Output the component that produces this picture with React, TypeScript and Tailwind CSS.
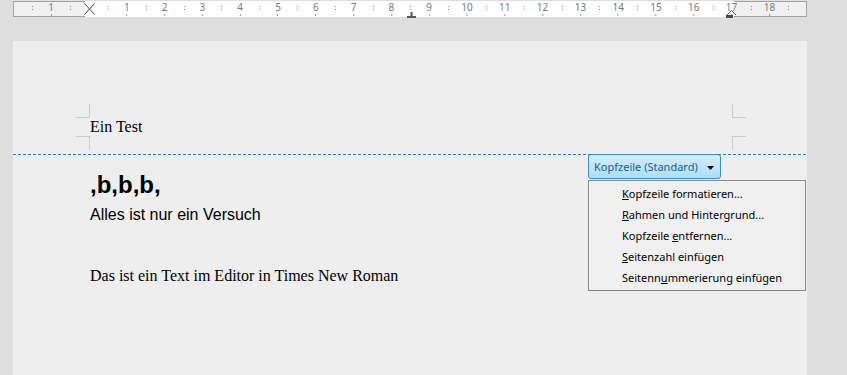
import React from "react";

const CM = 37.8;
const ZERO = 76;

function Ruler() {
  const ints: number[] = [];
  for (let n = -1; n <= 18; n++) if (n !== 0) ints.push(n);
  const halves: number[] = [];
  for (let h = -1.5; h <= 18.5; h += 1) halves.push(h);
  return (
    <div className="relative w-[794px] h-[16px] flex">
      <div className="w-[72px] h-full bg-[#f0f0f0] border border-r-0 border-[#a3a3a3]" />
      <div className="flex-1 h-full bg-white" />
      <div className="w-[73px] h-full bg-[#f0f0f0] border border-l-0 border-[#a3a3a3]" />
      <div className="absolute inset-0 pointer-events-none">
        {ints.map((n) => (
          <div
            key={n}
            className="absolute top-0 flex flex-col items-center -translate-x-1/2"
            style={{ left: ZERO + n * CM }}
          >
            <span className="mt-px text-[10px] leading-[10px] text-[#7b7b7b] font-['Noto_Sans',sans-serif]">
              {Math.abs(n)}
            </span>
            <span className="mt-[2px] w-px h-[2px] bg-[#9a9a9a]" />
          </div>
        ))}
        {halves.map((h) => (
          <div
            key={h}
            className="absolute top-[5px] flex flex-col gap-[2px]"
            style={{ left: Math.round(ZERO + h * CM) }}
          >
            <span className="w-px h-px bg-[#8a8a8a]" />
            <span className="w-px h-px bg-[#8a8a8a]" />
          </div>
        ))}
        <svg className="absolute left-[71px] top-[2px]" width="11" height="12" viewBox="0 0 11 12">
          <path d="M0.5 0.5 L10.5 11.5 M10.5 0.5 L0.5 11.5" stroke="#4a4a4a" strokeWidth="1" fill="none" />
        </svg>
        <svg className="absolute left-[394px] top-[11px]" width="9" height="6" viewBox="0 0 9 6">
          <rect x="3.5" y="0" width="2" height="5" fill="#555" />
          <rect x="0" y="4" width="9" height="2" fill="#555" />
        </svg>
        <svg className="absolute left-[713px] top-[9px]" width="11" height="8" viewBox="0 0 11 8">
          <path d="M1 5 L5.5 0.5 L10 5" stroke="#555" strokeWidth="1" fill="none" />
          <rect x="0" y="5" width="7" height="3" fill="#4a4a4a" />
        </svg>
      </div>
    </div>
  );
}

function Corner({ side, pos }: { side: "l" | "r"; pos: "t" | "b" }) {
  const cls =
    side === "l"
      ? pos === "t"
        ? "border-r border-b"
        : "border-r border-t"
      : pos === "t"
      ? "border-l border-b"
      : "border-l border-t";
  return <div className={`w-[14px] h-[14px] border-[#cccccc] ${cls}`} />;
}

export default function App() {
  return (
    <div className="w-[847px] h-[375px] overflow-hidden bg-[#dedede] flex flex-col">
      <div className="h-[41px] pt-px pl-[13px] shrink-0">
        <Ruler />
      </div>
      <div className="relative ml-[13px] w-[794px] flex-1 bg-[#eeeeee] flex flex-col">
        {/* header */}
        <div className="h-[113px] pt-[63px] pl-[63px] pr-[61px] flex justify-between shrink-0">
          <div className="flex flex-col">
            <Corner side="l" pos="t" />
            <div className="h-[18px] pl-[14px] whitespace-nowrap text-[16px] leading-[18px] text-black font-['Liberation_Serif',serif]">
              Ein Test
            </div>
            <Corner side="l" pos="b" />
          </div>
          <div className="flex flex-col">
            <Corner side="r" pos="t" />
            <div className="h-[18px]" />
            <Corner side="r" pos="b" />
          </div>
        </div>
        <div className="h-px w-full shrink-0 bg-[repeating-linear-gradient(90deg,#2b78b8_0_3px,transparent_3px_5px)]" />
        {/* body */}
        <div className="pl-[77px] flex flex-col text-black">
          <div className="mt-[16px] text-[24px] leading-[27px] font-bold font-['Liberation_Sans',sans-serif]">
            ,b,b,b,
          </div>
          <div className="mt-[8px] text-[16px] leading-[18px] font-['Liberation_Sans',sans-serif]">
            Alles ist nur ein Versuch
          </div>
          <div className="mt-[43px] text-[16px] leading-[18px] font-['Liberation_Serif',serif]">
            Das ist ein Text im Editor in Times New Roman
          </div>
        </div>
        {/* header button + menu overlay */}
        <div className="absolute left-[575px] top-[113px] flex flex-col items-start font-['Noto_Sans',sans-serif]">
          <div className="h-[25px] w-[133px] flex items-center justify-between pl-[5px] pr-[6px] border border-[#3f8bc6] rounded-[3px] bg-linear-to-b from-[#d2ecfc] to-[#abdff9] text-[#1d5e90] text-[11px] leading-[15px]">
            <span className="whitespace-nowrap">Kopfzeile (Standard)</span>
            <svg className="mt-[2px]" width="7" height="4" viewBox="0 0 7 4">
              <path d="M0 0 H7 L3.5 4 Z" fill="#000" />
            </svg>
          </div>
          <div className="mt-px w-[218px] border border-[#8c8c8c] bg-[#f0f0f0] pt-[2px] pb-[2px] text-[11px] text-black">
            <div className="h-[21px] leading-[21px] pl-[33px] whitespace-nowrap">
              <span className="underline">K</span>opfzeile formatieren...
            </div>
            <div className="h-[21px] leading-[21px] pl-[33px] whitespace-nowrap">
              <span className="underline">R</span>ahmen und Hintergrund...
            </div>
            <div className="h-[21px] leading-[21px] pl-[33px] whitespace-nowrap">
              Kopfzeile <span className="underline">e</span>ntfernen...
            </div>
            <div className="h-[21px] leading-[21px] pl-[33px] whitespace-nowrap">
              <span className="underline">S</span>eitenzahl einfügen
            </div>
            <div className="h-[21px] leading-[21px] pl-[33px] whitespace-nowrap">
              Seitenn<span className="underline">u</span>mmerierung einfügen
            </div>
          </div>
        </div>
      </div>
    </div>
  );
}
